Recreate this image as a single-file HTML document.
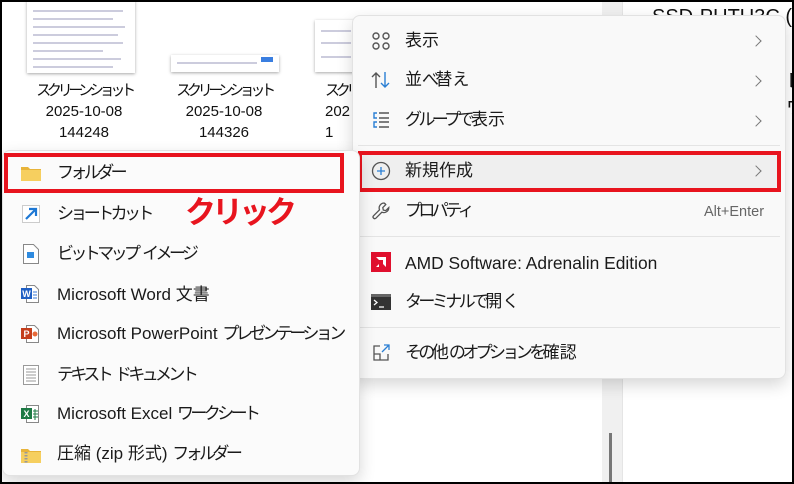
<!DOCTYPE html>
<html><head><meta charset="utf-8"><style>
*{margin:0;padding:0;box-sizing:border-box}
body{width:794px;height:484px;overflow:hidden;background:#fff;position:relative;font-family:"Liberation Sans","Noto Sans CJK JP",sans-serif;color:#1a1a1a}
.frame{position:absolute;left:0;top:0;width:794px;height:484px;border:2px solid #000;z-index:50;pointer-events:none}
.abs{position:absolute}
.cap{position:absolute;width:140px;text-align:center;font-size:15px;line-height:21px;color:#111}
.cap k{letter-spacing:-4.3px}
.thumb{position:absolute;background:#fff;box-shadow:0 1px 3px rgba(0,0,0,.35)}
.thumb i{position:absolute;left:6px;height:2px;background:#ccd;display:block}
.menu{position:absolute;background:#f9f9f9;border:1px solid #e2e2e2;border-radius:8px;box-shadow:0 6px 16px rgba(0,0,0,.16)}
.it{position:absolute;font-size:17px;line-height:20px;white-space:nowrap}
k{letter-spacing:-3.6px}
.sep{position:absolute;height:1px;background:#e4e4e4}
.chev{position:absolute;width:8px;height:8px;border-right:1.3px solid #777;border-top:1.3px solid #777;transform:rotate(45deg)}
.red{position:absolute;border:4px solid #e8141e}
</style></head><body>
<div class="abs" style="left:602px;top:0;width:20px;height:484px;background:#f0f0f0"></div>
<div class="abs" style="left:622px;top:0;width:1px;height:484px;background:#e5e5e5"></div>
<div class="abs" style="left:609px;top:433px;width:3px;height:51px;background:#777"></div>
<div class="abs" style="left:652px;top:6px;font-size:20px;color:#111;white-space:nowrap">SSD-PUTU3C (D</div>
<div class="abs" style="left:786px;top:66px;font-size:19px;color:#111">レ<br>ワ</div>

<div class="thumb" style="left:27px;top:0;width:108px;height:73px">
<i style="top:10px;width:90px"></i><i style="top:18px;width:80px"></i><i style="top:26px;width:92px"></i><i style="top:34px;width:85px"></i><i style="top:42px;width:90px"></i><i style="top:50px;width:70px"></i><i style="top:58px;width:88px"></i><i style="top:66px;width:80px"></i></div>
<div class="thumb" style="left:171px;top:55px;width:108px;height:17px"><i style="top:7px;width:80px"></i><div class="abs" style="right:6px;top:2px;width:12px;height:5px;background:#3a7ee0"></div></div>
<div class="thumb" style="left:315px;top:20px;width:45px;height:52px"><i style="top:10px;width:30px"></i><i style="top:22px;width:30px"></i><i style="top:36px;width:30px"></i></div>
<div class="cap" style="left:14px;top:80px"><k>スクリーンショット</k><br>2025-10-08<br>144248</div>
<div class="cap" style="left:154px;top:80px"><k>スクリーンショット</k><br>2025-10-08<br>144326</div>
<div class="cap" style="left:294px;top:80px;text-align:left;padding-left:31px"><k>スクリ</k><br>202<br>1</div>

<div class="menu" style="left:352px;top:15px;width:434px;height:364px"></div>
<svg class="abs" style="left:371px;top:31px" width="20" height="20" viewBox="0 0 20 20" fill="none" stroke="#555" stroke-width="1.4"><rect x="2" y="2" width="6" height="6" rx="3"/><rect x="12" y="2" width="6" height="6" rx="3"/><rect x="2" y="12" width="6" height="6" rx="3"/><rect x="12" y="12" width="6" height="6" rx="3"/></svg>
<div class="it" style="left:405px;top:31px">表示</div><div class="chev" style="left:752px;top:37px"></div>
<svg class="abs" style="left:371px;top:70px" width="20" height="20" viewBox="0 0 20 20" fill="none" stroke-width="1.4"><path d="M5 18V3M1 7l4-4 4 4" stroke="#555"/><path d="M14 2v15M10 13l4 4 4-4" stroke="#2a7fd4"/></svg>
<div class="it" style="left:405px;top:70px">並<k>べ</k>替<k>え</k></div><div class="chev" style="left:752px;top:77px"></div>
<svg class="abs" style="left:371px;top:110px" width="20" height="20" viewBox="0 0 20 20" fill="none" stroke-width="1.4"><path d="M6 3H3v5h3M6 12H3v5h3" stroke="#2a7fd4"/><path d="M8 3h10M8 8h10M8 12h10M8 17h10" stroke="#555"/></svg>
<div class="it" style="left:405px;top:110px"><k>グループで</k>表示</div><div class="chev" style="left:752px;top:117px"></div>
<div class="sep" style="left:358px;top:145px;width:422px"></div>
<div class="abs" style="left:362px;top:154px;width:415px;height:35px;background:#efefef;border-radius:4px"></div>
<svg class="abs" style="left:371px;top:161px" width="20" height="20" viewBox="0 0 20 20" fill="none" stroke-width="1.3"><circle cx="10" cy="10" r="8.5" stroke="#555"/><path d="M10 6v8M6 10h8" stroke="#2a7fd4"/></svg>
<div class="it" style="left:405px;top:161px">新規作成</div><div class="chev" style="left:752px;top:167px"></div>
<div class="red" style="left:358px;top:151px;width:423px;height:41px"></div>
<svg class="abs" style="left:371px;top:201px" width="20" height="20" viewBox="0 0 20 20" fill="none" stroke="#555" stroke-width="1.3"><path d="M13 2a5 5 0 0 0-4.5 6.8L2.5 14.8a1.7 1.7 0 0 0 2.4 2.4l6-6A5 5 0 0 0 17.8 6.6l-3 3-2.5-.5-.5-2.5 3-3A5 5 0 0 0 13 2z"/></svg>
<div class="it" style="left:405px;top:201px"><k>プロパティ</k></div>
<div class="it" style="left:704px;top:202px;font-size:14.5px;color:#666">Alt+Enter</div>
<div class="sep" style="left:358px;top:236px;width:422px"></div>
<div class="abs" style="left:371px;top:252px;width:20px;height:20px;background:#e0102e"></div>
<svg class="abs" style="left:371px;top:252px" width="20" height="20" viewBox="0 0 20 20"><path d="M5 5h10v10l-3-3V8H8z M5 15l3-3v3z" fill="#fff"/></svg>
<div class="it" style="left:405px;top:253px;font-size:17.4px">AMD Software: Adrenalin Edition</div>
<div class="abs" style="left:371px;top:294px;width:20px;height:16px;background:#333;border-top:3px solid #666"></div>
<svg class="abs" style="left:371px;top:294px" width="20" height="16" viewBox="0 0 20 16" fill="none" stroke="#fff" stroke-width="1.3"><path d="M3 6l3 2.5-3 2.5M8 13h5"/></svg>
<div class="it" style="left:405px;top:292px"><k>ターミナルで</k>開<k>く</k></div>
<div class="sep" style="left:358px;top:327px;width:422px"></div>
<svg class="abs" style="left:371px;top:343px" width="20" height="20" viewBox="0 0 20 20" fill="none" stroke-width="1.3"><path d="M9 3H3v14h14v-6M3 11h6v6" stroke="#555"/><path d="M11 9l7-7M13 2h5v5" stroke="#2a7fd4"/></svg>
<div class="it" style="left:405px;top:343px"><k>その</k>他<k>のオプションを</k>確認</div>

<div class="menu" style="left:2px;top:150px;width:358px;height:326px;background:#fbfbfb;z-index:5"></div>
<div style="position:absolute;left:0;top:0;z-index:6">
<svg class="abs" style="left:21px;top:165px" width="20" height="16" viewBox="0 0 20 16"><path d="M0 2h7l2 2h11v12H0z" fill="#e8b43a"/><path d="M0 5h20v11H0z" fill="#f6cf5f"/></svg>
<div class="it" style="left:57px;top:163px"><k>フォルダー</k></div>
<div class="red" style="left:4px;top:153px;width:340px;height:40px"></div>
<svg class="abs" style="left:22px;top:205px" width="18" height="18" viewBox="0 0 18 18"><rect x=".5" y=".5" width="17" height="17" fill="#fff" stroke="#ccc"/><path d="M4 14L13 5M7 4h7v7" stroke="#1e78d4" stroke-width="2.2" fill="none"/></svg>
<div class="it" style="left:57px;top:204px"><k>ショートカット</k></div>
<svg class="abs" style="left:23px;top:244px" width="16" height="20" viewBox="0 0 16 20"><path d="M.5.5h10l5 5v14H.5z" fill="#fff" stroke="#888"/><rect x="4" y="8" width="7" height="6" fill="#2f8be0"/></svg>
<div class="it" style="left:57px;top:244px"><k>ビットマップ</k> <k>イメージ</k></div>
<svg class="abs" style="left:20px;top:284px" width="20" height="20" viewBox="0 0 20 20"><path d="M6.5 1.5h8l4 4v13h-12z" fill="#fff" stroke="#888"/><rect x="1" y="4" width="11" height="11" fill="#1f5fc4"/><text x="6.5" y="13" font-size="9" fill="#fff" text-anchor="middle" font-family="Liberation Sans" font-weight="bold">W</text><path d="M13 8h4M13 11h4M13 14h4" stroke="#3a7ad8"/></svg>
<div class="it" style="left:57px;top:285px">Microsoft Word 文書</div>
<svg class="abs" style="left:20px;top:324px" width="20" height="20" viewBox="0 0 20 20"><path d="M6.5 1.5h8l4 4v13h-12z" fill="#fff" stroke="#888"/><rect x="1" y="4" width="11" height="11" fill="#c43e1c"/><text x="6.5" y="13" font-size="9" fill="#fff" text-anchor="middle" font-family="Liberation Sans" font-weight="bold">P</text><circle cx="15" cy="10" r="2.5" fill="#e86a3a"/></svg>
<div class="it" style="left:57px;top:324px">Microsoft PowerPoint <k>プレゼンテーション</k></div>
<svg class="abs" style="left:23px;top:365px" width="16" height="20" viewBox="0 0 16 20"><path d="M.5.5h15v19H.5z" fill="#fff" stroke="#999"/><path d="M3 4h10M3 7h10M3 10h10M3 13h10M3 16h10" stroke="#999"/></svg>
<div class="it" style="left:57px;top:365px"><k>テキスト</k> <k>ドキュメント</k></div>
<svg class="abs" style="left:20px;top:404px" width="20" height="20" viewBox="0 0 20 20"><path d="M6.5 1.5h12v17h-12z" fill="#fff" stroke="#888"/><rect x="1" y="4" width="11" height="11" fill="#1d7a44"/><text x="6.5" y="13" font-size="9" fill="#fff" text-anchor="middle" font-family="Liberation Sans" font-weight="bold">X</text><path d="M13 7h5M13 10h5M13 13h5M15 5v11" stroke="#1d7a44"/></svg>
<div class="it" style="left:57px;top:404px">Microsoft Excel <k>ワークシート</k></div>
<svg class="abs" style="left:21px;top:447px" width="20" height="16" viewBox="0 0 20 16"><path d="M0 2h7l2 2h11v12H0z" fill="#e8b43a"/><path d="M0 5h20v11H0z" fill="#f6cf5f"/><path d="M5 5v11" stroke="#999" stroke-width="3" stroke-dasharray="1.5 1.5"/></svg>
<div class="it" style="left:57px;top:444px">圧縮 (zip 形式) <k>フォルダー</k></div>
<div class="abs" style="left:185px;top:193px;font-size:31px;line-height:40px;font-weight:bold;color:#e8141e;letter-spacing:-4px;white-space:nowrap">クリック</div>
</div>
<div class="frame"></div>
</body></html>
